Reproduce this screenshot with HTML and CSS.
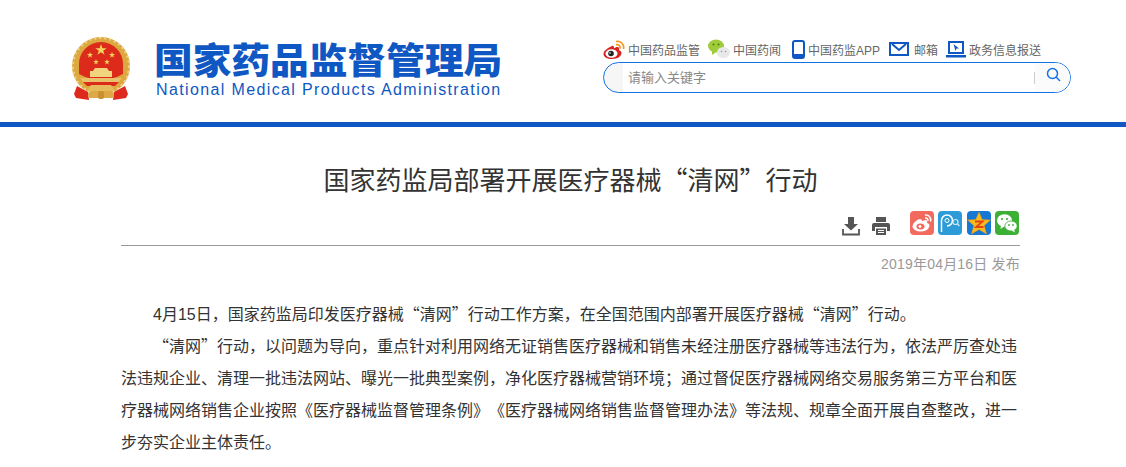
FILE: index.html
```html
<!DOCTYPE html>
<html lang="zh-CN">
<head>
    <meta charset="UTF-8">
    <title>国家药监局部署开展医疗器械“清网”行动</title>
    <link rel="stylesheet" href="styles.css">
</head>
<body>
    <header class="header">
        <div class="header-inner">
            <div class="logo">
                <svg class="emblem" width="62" height="66" viewBox="0 0 62 66">
                    <defs>
                        <polygon id="star" points="0,-1 .224,-.309 .951,-.309 .363,.118 .588,.809 0,.382 -.588,.809 -.363,.118 -.951,-.309 -.224,-.309" fill="#f4d35c"/>
                    </defs>
                    <circle cx="30" cy="30" r="29" fill="#dda83f"/>
                    <circle cx="30" cy="30" r="28" fill="none" stroke="#efd38c" stroke-width="2" stroke-dasharray="2 3"/>
                    <path d="M8 28 A22 22 0 0 1 52 28 V38 Q30 50 8 38 Z" fill="#dc2a1b"/>
                    <use href="#star" transform="translate(30 14) scale(6)"/>
                    <use href="#star" transform="translate(19 19) scale(3.300)"/>
                    <use href="#star" transform="translate(41 19) scale(3.300)"/>
                    <use href="#star" transform="translate(25 26) scale(3)"/>
                    <use href="#star" transform="translate(36 26) scale(3)"/>
                    <path d="M24 32 H36 L38 35 H41 V41 H19 V35 H22 Z" fill="#f0d47e"/>
                    <path d="M9 42 H51 L47 47 H13 Z" fill="#e8c16a"/>
                    <path d="M12 46 H48 L44 50 H16 Z" fill="#dc2a1b"/>
                    <path d="M20 49 H40 L44 55 H16 Z" fill="#e6bb5c"/>
                    <path d="M6 50 L17 56 L18 64 L5 62 L3 58 Z" fill="#de2a1e"/>
                    <path d="M54 50 L43 56 L42 64 L55 62 L57 58 Z" fill="#de2a1e"/>
                    <rect x="17" y="56" width="26" height="6" rx="2" fill="#dca848"/>
                    <rect x="27" y="55" width="6" height="8" rx="2" fill="#c98f32"/>
                </svg>
                <div class="logo-text">
                    <div class="logo-cn">国家药品监督管理局</div>
                    <div class="logo-en">National Medical Products Administration</div>
                </div>
            </div>
            <div class="tools">
                <nav class="tool-links">
                    <a class="tool-link">
                        <svg width="22" height="19" viewBox="0 0 22 19">
                            <path d="M8 6.500C4 8.500 0.500 11 0.500 14c0 3 4 5 8.500 5 6 0 9.500-3 9.500-6 0-1.500-1.500-2.500-2.500-2.700 1-2.800-1-3.800-3.500-2.800l-1.500.7c.2-2.400-1.500-2.900-3-1.700z" fill="#d8241f"/>
                            <ellipse cx="8.500" cy="13.500" rx="6" ry="4.300" fill="#fff"/>
                            <circle cx="8" cy="13.500" r="2.800" fill="#222"/>
                            <circle cx="7" cy="13" r=".8" fill="#fff"/>
                            <path d="M13 1.500c4.500-1 8.500 2.500 7.500 7.500M13 4.700c2.500-.5 4.500 1.300 4 3.800" fill="none" stroke="#f09a1f" stroke-width="1.700"/>
                        </svg>
                        <span>中国药品监管</span>
                    </a>
                    <a class="tool-link">
                        <svg width="22" height="20" viewBox="0 0 22 20">
                            <ellipse cx="8" cy="7" rx="8" ry="6.500" fill="#a0cc3c"/>
                            <path d="M4 11 L4 16 L9 12.500 Z" fill="#a0cc3c"/>
                            <ellipse cx="15.500" cy="13.500" rx="6.500" ry="5.500" fill="#e8e8e8"/>
                            <circle cx="5.500" cy="5.500" r="1" fill="#4d7a10"/>
                            <circle cx="10.500" cy="5.500" r="1" fill="#4d7a10"/>
                            <circle cx="13.500" cy="12.500" r=".8" fill="#999"/>
                            <circle cx="17.500" cy="12.500" r=".8" fill="#999"/>
                        </svg>
                        <span>中国药闻</span>
                    </a>
                    <a class="tool-link">
                        <svg width="16" height="19" viewBox="-3 0 16 19">
                            <rect x="1" y="1" width="11" height="17" rx="2" fill="none" stroke="#0f57c2" stroke-width="2"/>
                            <rect x="1" y="14" width="11" height="4" rx="1" fill="#0f57c2"/>
                        </svg>
                        <span>中国药监APP</span>
                    </a>
                    <a class="tool-link">
                        <svg width="23" height="14" viewBox="-1 0 23 14">
                            <rect x="1" y="1" width="18" height="12" fill="none" stroke="#0f57c2" stroke-width="2"/>
                            <path d="M3 2 L10 8 L17 2" fill="none" stroke="#0f57c2" stroke-width="2"/>
                        </svg>
                        <span>邮箱</span>
                    </a>
                    <a class="tool-link">
                        <svg width="20" height="17" viewBox="0 0 20 17">
                            <rect x="3" y="1" width="14" height="11" fill="none" stroke="#0f57c2" stroke-width="2"/>
                            <path d="M7.500 3 L13 7.500 L10.500 7.500 L9.500 10 Z" fill="#0f57c2"/>
                            <rect x="0" y="14" width="20" height="2.500" fill="#0f57c2"/>
                        </svg>
                        <span>政务信息报送</span>
                    </a>
                </nav>
                <div class="search">
                    <input class="search-input" type="text" placeholder="请输入关键字">
                    <span class="search-sep"></span>
                    <span class="search-btn">
                        <svg width="15" height="15" viewBox="0 0 15 15">
                            <circle cx="6.500" cy="6.500" r="5" fill="none" stroke="#1273e6" stroke-width="1.500"/>
                            <path d="M10 10 L14 14" stroke="#1273e6" stroke-width="1.500"/>
                        </svg>
                    </span>
                </div>
            </div>
        </div>
    </header>

    <main class="article">
        <h1 class="article-title">国家药监局部署开展医疗器械“清网”行动</h1>
        <div class="article-bar">
            <svg class="bar-icon" width="20" height="20" viewBox="0 0 20 20">
                <path d="M7 1 H13 V8 H17 L10 14.500 L3 8 H7 Z" fill="#555"/>
                <path d="M2 13 V18.500 H18 V13" fill="none" stroke="#555" stroke-width="1.800"/>
            </svg>
            <svg class="bar-icon" width="20" height="20" viewBox="0 0 20 20">
                <path d="M5 1 H15 V6 H5 Z" fill="#555"/>
                <path d="M3 7 H17 Q19 7 19 9 V15 H16 V11 H4 V15 H1 V9 Q1 7 3 7 Z" fill="#555"/>
                <path d="M5 12.500 H15 V19 H5 Z" fill="#555"/>
                <path d="M7 14.500 H13 M7 16.500 H13" stroke="#fff" stroke-width="1"/>
            </svg>
            <div class="shares">
                <span class="share share-weibo">
                    <svg width="24" height="24" viewBox="0 0 24 24">
                        <path d="M9 8C5 10 2.500 13 2.500 15.500 2.500 18.500 7 20.500 11 20.500c5 0 8.500-3 8.500-6 0-1.500-1.500-2.300-2.500-2.500 1-2.500-1-3.500-3-2.500l-2 .8c.3-2-1-2.600-2.500-1.800z" fill="#fff"/>
                        <ellipse cx="10.500" cy="15.500" rx="4" ry="3" fill="#f2695e"/>
                        <circle cx="10" cy="15.500" r="1.400" fill="#fff"/>
                        <path d="M15 4c3.500-.5 6.500 2.500 5.500 6.500M15 7c2-.3 3.200 1 2.900 3" fill="none" stroke="#fff" stroke-width="1.500"/>
                    </svg>
                </span>
                <span class="share share-tweibo">
                    <svg width="24" height="24" viewBox="0 0 24 24">
                        <path d="M3.500 21 V9.500 A5.500 5.500 0 1 1 9 15" fill="none" stroke="#fff" stroke-width="1.500"/>
                        <circle cx="9" cy="9.500" r="2" fill="none" stroke="#fff" stroke-width="1"/>
                        <circle cx="17.500" cy="11" r="2.500" fill="none" stroke="#cfe8f7" stroke-width="1.200"/>
                        <path d="M19.500 13 L21.500 15" stroke="#cfe8f7" stroke-width="1.200"/>
                    </svg>
                </span>
                <span class="share share-qzone">
                    <svg width="24" height="24" viewBox="0 0 24 24">
                        <polygon points="12,1 15.200,8.500 23.500,9 17.200,14.500 19.500,23 12,18.500 4.500,23 6.800,14.500 .5,9 8.800,8.500" fill="#f9bb1b" stroke="#e8941a" stroke-width=".5"/>
                        <path d="M8 10.500 H15.500 L9 16 H16.500" fill="none" stroke="#e0421a" stroke-width="1.800"/>
                    </svg>
                </span>
                <span class="share share-wechat">
                    <svg width="24" height="24" viewBox="0 0 24 24">
                        <ellipse cx="9.500" cy="9.500" rx="7.500" ry="6.300" fill="#fff"/>
                        <path d="M6 14 L5.500 18 L10 15 Z" fill="#fff"/>
                        <ellipse cx="16" cy="15" rx="6.200" ry="5" fill="#fff" stroke="#3cb034" stroke-width=".8"/>
                        <path d="M19 18.500 L20 21.500 L16.500 19.500 Z" fill="#fff"/>
                        <circle cx="7" cy="8" r="1.100" fill="#3cb034"/>
                        <circle cx="12" cy="8" r="1.100" fill="#3cb034"/>
                        <circle cx="14" cy="14" r=".9" fill="#3cb034"/>
                        <circle cx="18" cy="14" r=".9" fill="#3cb034"/>
                    </svg>
                </span>
            </div>
        </div>
        <div class="article-date">2019年04月16日 发布</div>
        <div class="article-body">
            <p><span class="num">4</span>月<span class="num">15</span>日，国家药监局印发医疗器械“清网”行动工作方案，在全国范围内部署开展医疗器械“清网”行动。</p>
            <p>“清网”行动，以问题为导向，重点针对利用网络无证销售医疗器械和销售未经注册医疗器械等违法行为，依法严厉查处违法违规企业、清理一批违法网站、曝光一批典型案例，净化医疗器械营销环境；通过督促医疗器械网络交易服务第三方平台和医疗器械网络销售企业按照《医疗器械监督管理条例》《医疗器械网络销售监督管理办法》等法规、规章全面开展自查整改，进一步夯实企业主体责任。</p>
        </div>
    </main>
</body>
</html>
```

FILE: styles.css
```css
html, body {
    margin: 0;
    padding: 0;
}
body {
    height: 467px;
    overflow: hidden;
    background: #fff;
    font-family: "Liberation Sans", "Noto Sans CJK SC", sans-serif;
    color: #333;
}
.header {
    height: 122px;
    border-bottom: 5px solid #0f57c2;
}
.header-inner {
    display: flex;
    justify-content: space-between;
    padding: 36px 55px 0 71px;
}
.logo {
    display: flex;
    align-items: flex-start;
}
.emblem {
    margin-right: 23px;
}
.logo-text {
    padding-top: 4px;
}
.logo-cn {
    margin-left: -2px;
    font-family: "Noto Sans CJK SC", sans-serif;
    font-weight: 900;
    font-size: 36px;
    line-height: 36px;
    transform: scaleX(1.075);
    transform-origin: left;
    color: #0f57c2;
}
.logo-en {
    margin-top: 4px;
    font-size: 16px;
    line-height: 20px;
    letter-spacing: 1.37px;
    color: #0f57c2;
}
.tools {
    width: 468px;
}
.tool-links {
    display: flex;
    height: 26px;
    align-items: center;
    font-size: 12px;
    color: #666;
}
.tool-link {
    display: flex;
    align-items: center;
    gap: 3px;
    margin-right: 8px;
}
.search {
    display: flex;
    align-items: center;
    height: 29px;
    border: 1px solid #1273e6;
    border-radius: 16px;
    background: linear-gradient(90deg, #f6f6f6 19px, #fff 19px);
}
.search-input {
    border: 0;
    outline: 0;
    margin-left: 22px;
    width: 404px;
    font-size: 13px;
    font-family: "Liberation Sans", "Noto Sans CJK SC", sans-serif;
    background: transparent;
}
.search-input::placeholder {
    color: #888;
}
.search-sep {
    width: 1px;
    height: 12px;
    background: #ccc;
}
.search-btn {
    flex: 1;
    display: flex;
    align-items: center;
    align-self: stretch;
    padding: 0 0 6px 11px;
    background: #fbfbfb;
    border-radius: 0 16px 16px 0;
}
.article {
    width: 899px;
    margin-left: 121px;
}
.article-title {
    margin: 0;
    padding-top: 33px;
    font-family: "Noto Sans CJK SC", sans-serif;
    font-size: 26px;
    font-weight: normal;
    line-height: 38px;
    text-align: center;
    text-spacing-trim: space-all;
    color: #333;
}
.article-bar {
    display: flex;
    justify-content: flex-end;
    height: 34px;
    padding: 13px 1px 0 0;
    border-bottom: 1px solid #999;
}
.bar-icon {
    margin: 5px 10px 0 0;
}
.shares {
    display: flex;
    gap: 4.33px;
    margin-left: 9px;
}
.share {
    display: block;
    width: 24px;
    height: 24px;
    border-radius: 4px;
}
.share-weibo { background: #f2695e; }
.share-tweibo { background: #2c9bd8; }
.share-qzone { background: #1478d4; }
.share-wechat { background: #3cb034; }
.article-date {
    margin-top: 8px;
    font-size: 14px;
    line-height: 20px;
    letter-spacing: .2px;
    text-align: right;
    color: #999;
}
.article-body {
    margin-top: 23px;
    font-family: "Noto Sans CJK SC", sans-serif;
    font-size: 16px;
    line-height: 32px;
    text-spacing-trim: space-all;
    color: #333;
}
.article-body p {
    margin: 0;
    text-indent: 32px;
}
.num {
    font-family: "Liberation Sans", sans-serif;
    line-height: 1;
}
```
